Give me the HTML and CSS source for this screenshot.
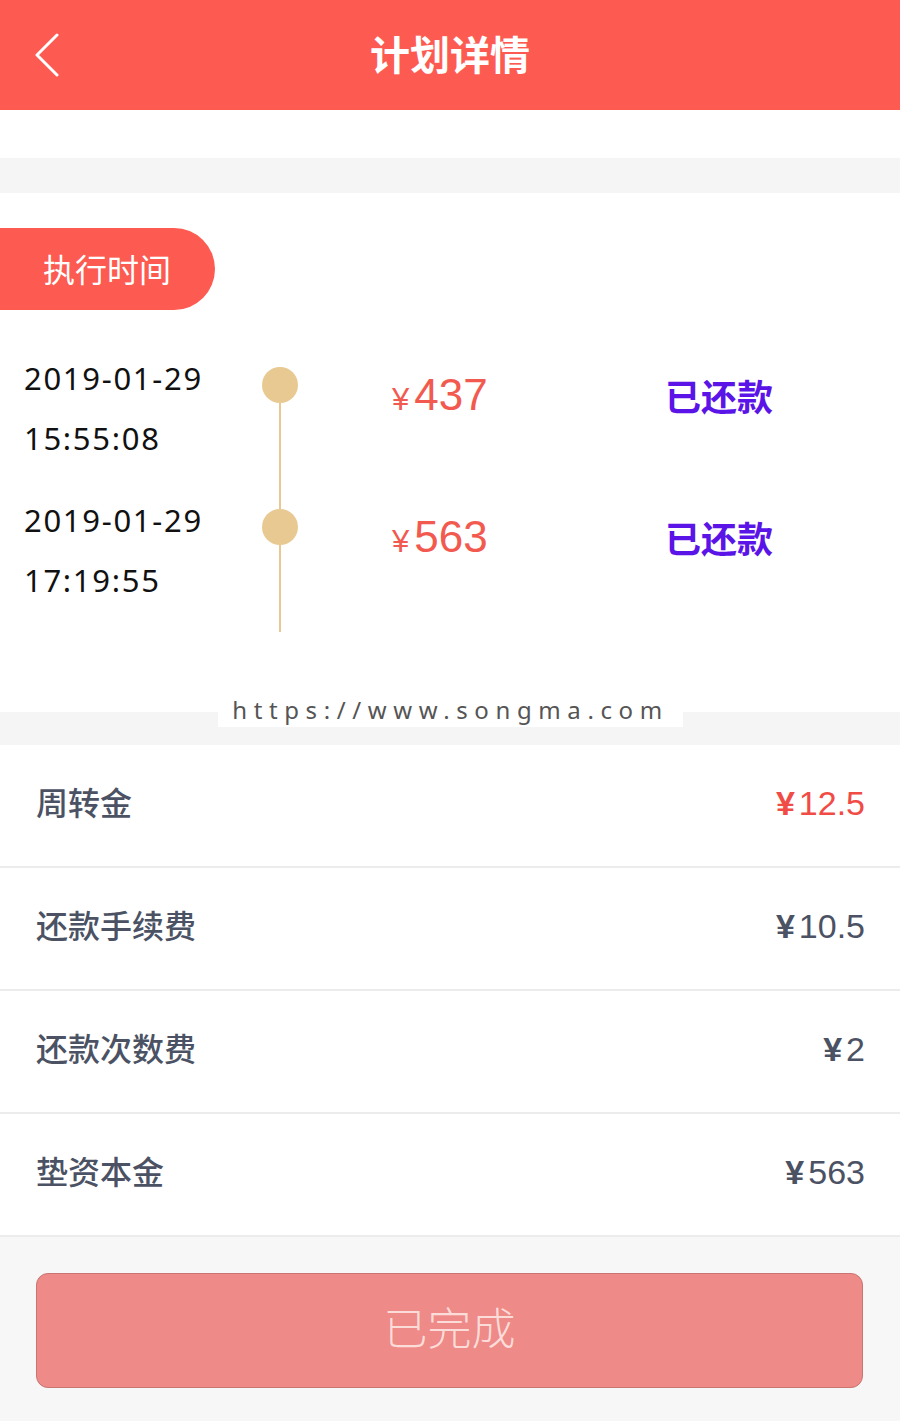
FILE: index.html
```html
<!DOCTYPE html>
<html lang="zh-CN">
<head>
<meta charset="UTF-8">
<meta name="viewport" content="width=device-width, initial-scale=1.0">
<title>计划详情</title>
<link rel="stylesheet" href="styles.css">
</head>
<body>
    <div class="page">
        <header class="topbar">
            <a class="back" href="#">
                <svg width="26" height="44" viewBox="0 0 26 44"><polyline points="23,2 3,22 23,42" fill="none" stroke="#fff" stroke-width="3" stroke-linecap="round" stroke-linejoin="round"/></svg>
            </a>
            <h1>计划详情</h1>
        </header>
        <div class="blank"></div>
        <div class="gap"></div>

        <section class="plan">
            <div class="pill">执行时间</div>
            <div class="timeline">
                <div class="item first">
                    <div class="date">2019-01-29<br>15:55:08</div>
                    <div class="axis"><span class="seg top"></span><span class="dot"></span><span class="seg"></span></div>
                    <div class="amount"><small>¥</small>437</div>
                    <div class="status">已还款</div>
                </div>
                <div class="item">
                    <div class="date">2019-01-29<br>17:19:55</div>
                    <div class="axis"><span class="seg top"></span><span class="dot"></span><span class="seg"></span></div>
                    <div class="amount"><small>¥</small>563</div>
                    <div class="status">已还款</div>
                </div>
            </div>
        </section>

        <div class="gap band">
            <span class="mark">https://www.songma.com</span>
        </div>

        <ul class="fees">
            <li><span>周转金</span><b class="red"><i>¥</i>12.5</b></li>
            <li><span>还款手续费</span><b><i>¥</i>10.5</b></li>
            <li><span>还款次数费</span><b><i>¥</i>2</b></li>
            <li><span>垫资本金</span><b><i>¥</i>563</b></li>
        </ul>

        <div class="footer">
            <button type="button" disabled>已完成</button>
        </div>
    </div>
</body>
</html>
```

FILE: styles.css
```css
body {
    margin: 0;
    padding: 0;
    background-color: #f7f7f7;
    font-family: "Noto Sans CJK SC", "Noto Sans", sans-serif;
}
.page {
    width: 900px;
    min-height: 1421px;
    background-color: #f7f7f7;
}
.topbar {
    height: 110px;
    background-color: #fd5a51;
    display: flex;
    align-items: center;
    justify-content: center;
    position: relative;
}
.topbar h1 {
    margin: 0 0 4px;
    color: #fff;
    font-size: 40px;
    font-weight: bold;
}
.back {
    position: absolute;
    left: 34px;
    top: 33px;
    display: block;
}
.blank {
    height: 48px;
    background-color: #fff;
}
.gap {
    height: 35px;
    background-color: #f5f5f5;
}
.band {
    height: 33px;
    position: relative;
}
.mark {
    position: absolute;
    left: 218px;
    top: -14px;
    width: 465px;
    height: 29px;
    background-color: #fff;
    color: #555;
    font-family: "Noto Sans", sans-serif;
    font-size: 24px;
    line-height: 24px;
    letter-spacing: 6.6px;
    text-align: center;
}
.plan {
    background-color: #fff;
    padding: 35px 0 80px;
}
.pill {
    width: 172px;
    height: 82px;
    padding-left: 43px;
    line-height: 80px;
    background-color: #fd5a51;
    border-radius: 0 41px 41px 0;
    color: #fff;
    font-size: 32px;
}
.timeline {
    margin-top: 38px;
}
.item {
    display: flex;
    height: 142px;
}
.date {
    width: 238px;
    padding-left: 24px;
    font-family: "Noto Sans", sans-serif;
    font-size: 31px;
    line-height: 60px;
    letter-spacing: 1.7px;
    color: #111;
}
.axis {
    width: 36px;
    display: flex;
    flex-direction: column;
    align-items: center;
}
.seg {
    width: 2px;
    flex: 1;
    background-color: #e8c992;
}
.seg.top {
    flex: none;
    height: 19px;
}
.first .seg.top {
    visibility: hidden;
}
.dot {
    width: 36px;
    height: 36px;
    border-radius: 50%;
    background-color: #e8c992;
}
.amount {
    width: 273px;
    padding-left: 94px;
    margin-top: 22px;
    font-family: "Liberation Sans", sans-serif;
    font-size: 44px;
    line-height: 50px;
    color: #f25a50;
}
.amount small {
    font-size: 31px;
    margin-right: 5px;
}
.status {
    margin-top: 22px;
    font-size: 36px;
    font-weight: bold;
    line-height: 50px;
    color: #5b14e8;
}
.fees {
    list-style: none;
    margin: 0;
    padding: 0;
    background-color: #fff;
}
.fees li {
    height: 121px;
    display: flex;
    align-items: center;
    justify-content: space-between;
    padding: 0 35px 0 36px;
    border-bottom: 2px solid #ececec;
}
.fees span {
    font-size: 32px;
    font-weight: 500;
    color: #4b5264;
    margin-bottom: 10px;
}
.fees b {
    font-family: "Liberation Sans", sans-serif;
    font-size: 34px;
    font-weight: normal;
    color: #4b5264;
    margin-bottom: 4px;
}
.fees b i {
    font-style: normal;
    font-weight: bold;
    margin-right: 4px;
}
.fees b.red {
    color: #f04c45;
}
.footer {
    padding: 36px 36px 0 36px;
}
button {
    width: 827px;
    height: 115px;
    padding-bottom: 10px;
    background-color: #ee8a87;
    border: 1px solid #c97572;
    border-radius: 12px;
    color: #fcdcd9;
    font-family: "Noto Sans CJK SC", sans-serif;
    font-size: 44px;
    font-weight: 300;
}
```
